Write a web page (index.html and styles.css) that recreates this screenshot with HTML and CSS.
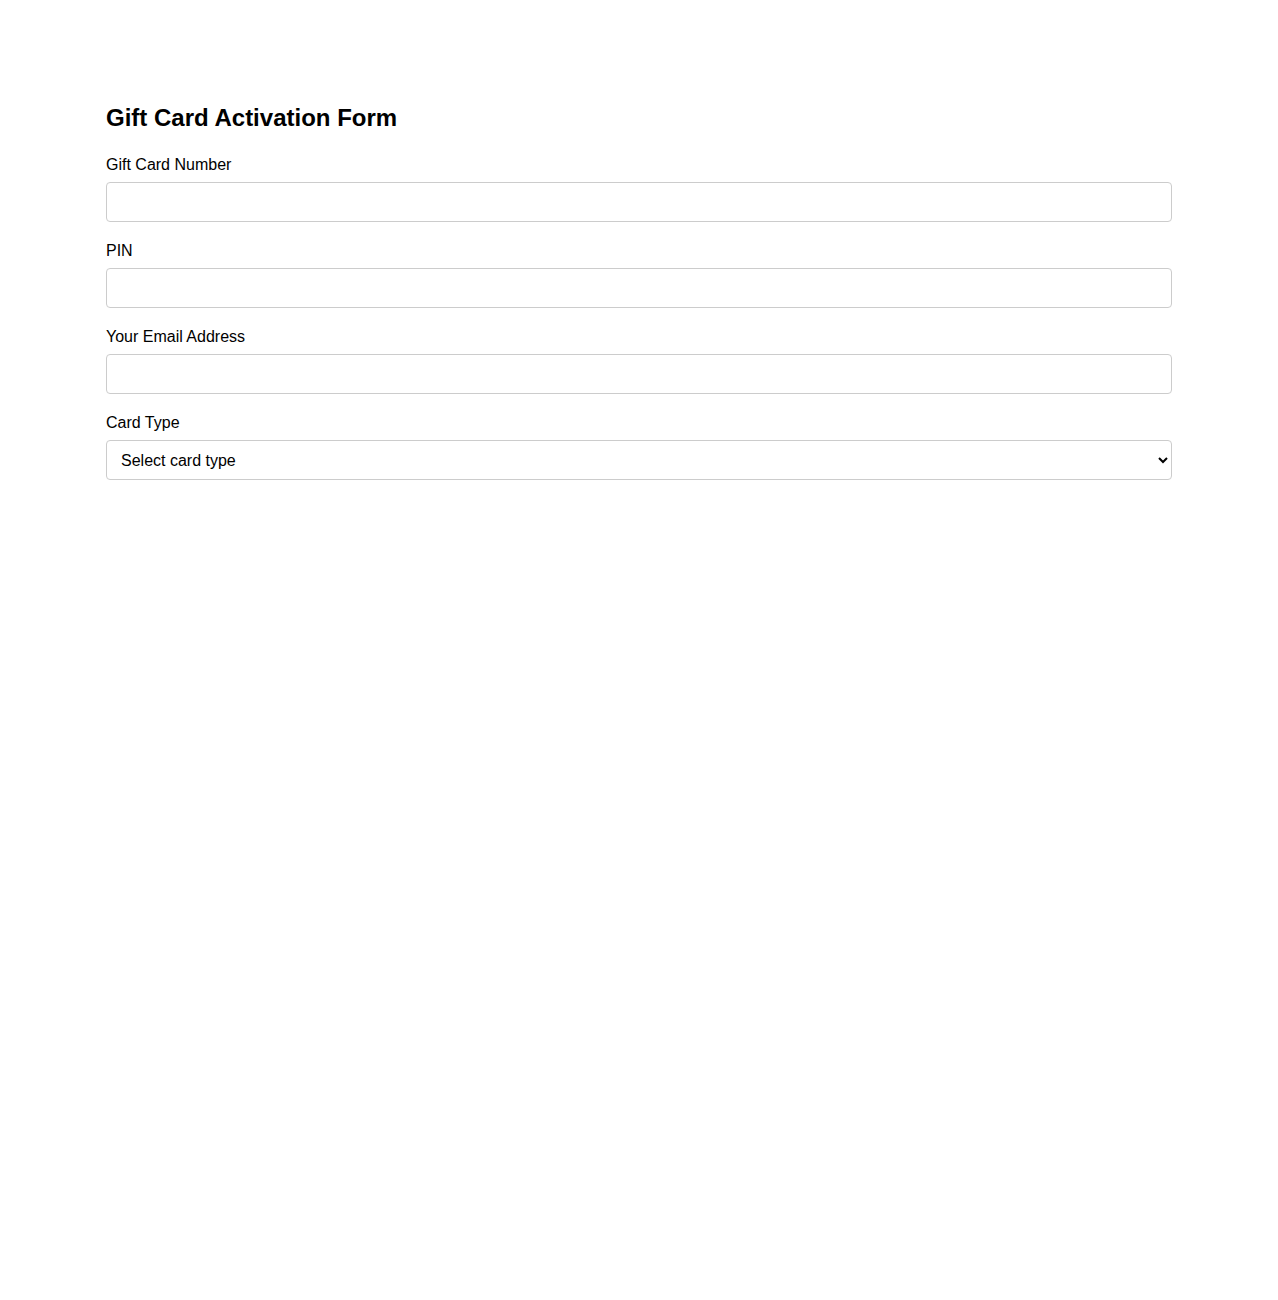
FILE: index.html
```html
<!DOCTYPE html>
<html lang="en">
<head>
    <meta charset="UTF-8">
    <meta name="viewport" content="width=device-width, initial-scale=1.0">
    <title>Gift Card Activation</title>
    <link rel="stylesheet" href="styles.css">
</head>
<body>
    <div class="container">
        <h2>Gift Card Activation Form</h2>
        <form id="activation-form">
            <div class="form-group">
                <label for="card-number">Gift Card Number</label>
                <input type="text" id="card-number" name="card_number">
            </div>
            <div class="form-group">
                <label for="pin">PIN</label>
                <input type="password" id="pin" name="pin">
            </div>
            <div class="form-group">
                <label for="email">Your Email Address</label>
                <input type="email" id="email" name="email">
            </div>
            <div class="form-group">
                <label for="card-type">Card Type</label>
                <select id="card-type" name="card_type">
                    <option value="">Select card type</option>
                    <option value="physical">Physical</option>
                    <option value="digital">Digital</option>
                </select>
            </div>
        </form>
    </div>
</body>
</html>
```

FILE: styles.css
```css
body {
    font-family: "Liberation Sans", Arial, sans-serif;
    background-color: #fff;
    color: #000;
    margin: 0;
    padding: 0;
}
.container {
    max-width: 1066px;
    margin: 0 auto;
    padding: 104px 0 40px;
}
h2 {
    font-size: 24px;
    margin: 0 0 24px;
}
.form-group {
    margin-bottom: 20px;
}
.form-group label {
    display: block;
    font-size: 16px;
    margin-bottom: 8px;
}
.form-group input,
.form-group select {
    display: block;
    width: 100%;
    height: 40px;
    box-sizing: border-box;
    padding: 10px;
    border: 1px solid #ccc;
    border-radius: 4px;
    font-family: inherit;
    font-size: 16px;
    background-color: #fff;
    color: #000;
}
```
